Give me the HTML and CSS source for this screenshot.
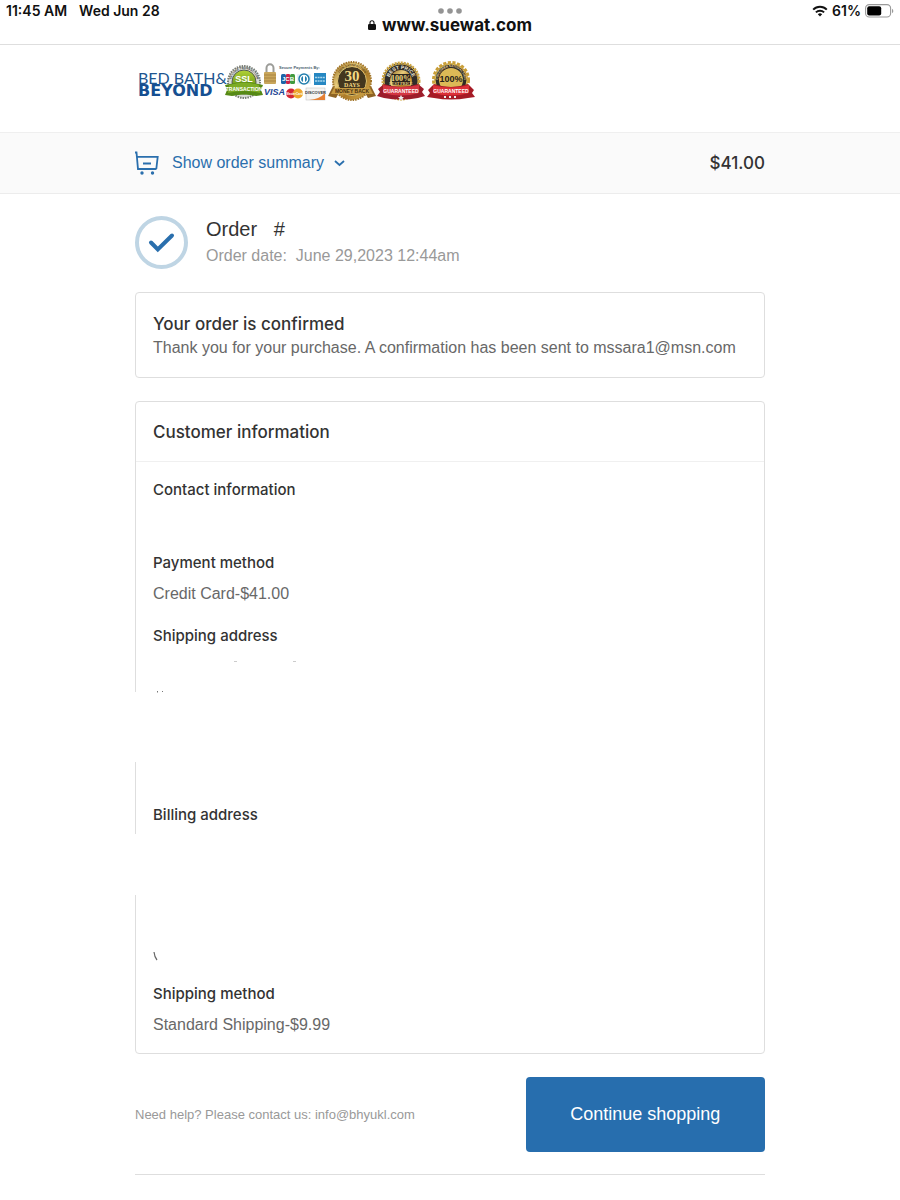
FILE: index.html
```html
<!DOCTYPE html>
<html lang="en">
<head>
    <meta charset="UTF-8">
    <meta name="viewport" content="width=device-width, initial-scale=1.0">
    <title>Order confirmation</title>
    <link rel="stylesheet" href="styles.css">
</head>
<body>
    <div class="browser-bar">
        <div class="status-left"><span>11:45 AM</span><span>Wed Jun 28</span></div>
        <div class="address">
            <svg class="dots" width="24" height="6" viewBox="0 0 24 6" fill="#949494"><circle cx="3" cy="3" r="2.8"/><circle cx="12" cy="3" r="2.8"/><circle cx="21" cy="3" r="2.8"/></svg>
            <div class="url">
                <svg width="8" height="10" viewBox="0 0 8 10"><rect y="4" width="8" height="6" rx="1.2" fill="#111"/><path d="M2 4.5V2.8a2 2 0 0 1 4 0v1.7" fill="none" stroke="#111" stroke-width="1.1"/></svg>
                <span>www.suewat.com</span>
            </div>
        </div>
        <div class="status-right">
            <svg width="16" height="12" viewBox="0 0 16 12" fill="none" stroke="#111" stroke-width="2"><path d="M1.2 4.6a9.6 9.6 0 0 1 13.6 0M3.9 7.4a5.8 5.8 0 0 1 8.2 0"/><path d="M8 11.6 5.8 9.3a3.2 3.2 0 0 1 4.4 0z" fill="#111" stroke="none"/></svg>
            <span>61%</span>
            <svg width="29" height="14" viewBox="0 0 29 14"><rect x=".6" y=".6" width="25" height="12.4" rx="3.6" fill="#fff" stroke="#999" stroke-width="1.1"/><rect x="2.2" y="2.2" width="14" height="9.2" rx="2" fill="#000"/><path d="M27 4.8c1.8.8 1.8 3.6 0 4.4z" fill="#999"/></svg>
        </div>
    </div>

    <header class="site-header">
        <div class="wrap">
            <svg class="banner" width="342" height="48" viewBox="0 0 342 48">
                <defs>
                    <linearGradient id="gold" x1="0" y1="0" x2="1" y2="1">
                        <stop offset="0" stop-color="#8d651d"/>
                        <stop offset=".35" stop-color="#e9cd7c"/>
                        <stop offset=".6" stop-color="#ad7b27"/>
                        <stop offset="1" stop-color="#d9b457"/>
                    </linearGradient>
                    <linearGradient id="green" x1="0" y1="0" x2="0" y2="1">
                        <stop offset="0" stop-color="#b3d334"/>
                        <stop offset="1" stop-color="#4c7d12"/>
                    </linearGradient>
                    <path id="arc30" d="M202 24a15 15 0 0 1 30 0"/>
                    <path id="arcBest" d="M254 24a12 12 0 0 1 24 0"/>
                    <path id="arcSat" d="M303 23a13 13 0 0 1 26 0"/>
                    <path id="arcSsl" d="M96 25a13 13 0 0 1 26 0"/>
                </defs>

                <!-- store name -->
                <text class="brand-top" x="3" y="27">BED BATH&amp;</text>
                <text class="brand-bottom" x="3" y="39">BEYOND</text>

                <!-- ssl seal -->
                <circle cx="109" cy="25" r="16" fill="#d9dcd8" stroke="#777c74" stroke-width="2" stroke-dasharray="1.5 1"/>
                <text class="tiny" fill="#444"><textPath href="#arcSsl" startOffset="50%">SECURE TRANSACTION</textPath></text>
                <circle cx="109" cy="25" r="12" fill="url(#green)" stroke="#555b52"/>
                <text class="seal-text" x="109" y="25" font-size="9">SSL</text>
                <path d="M90 28l5-1q14-4 28 0l5 1-2 5 2 5-7 1q-12-3-24 0l-7-1 2-5z" fill="#568916"/>
                <path d="M94 28q15-5 30 0l1 8q-16-4-32 0z" fill="#7dac25"/>
                <text class="seal-text" x="109" y="34" font-size="5">TRANSACTION</text>

                <!-- payment marks -->
                <text class="secure" x="144" y="12">Secure Payments By:</text>
                <path d="M131.500 16v-5a3.500 3.800 0 0 1 7 0v5" fill="none" stroke="#9b9c98" stroke-width="2"/>
                <rect x="129" y="15" width="12" height="12" rx="1" fill="#c9a65b"/>
                <path d="M129 18h12M129 21h12M129 24h12" stroke="#a98443"/>
                <rect x="146" y="17" width="5" height="10" rx="1.500" fill="#1c65a8"/>
                <rect x="151" y="17" width="4" height="10" rx="1" fill="#c8254c"/>
                <rect x="155" y="17" width="5" height="10" rx="1.500" fill="#3f9a3f"/>
                <text class="seal-text" x="153" y="24" font-size="6">JCB</text>
                <rect x="162" y="17" width="14" height="10" rx="1" fill="#e4f1f7"/>
                <circle cx="169" cy="22" r="5" fill="#fff" stroke="#207dad" stroke-width="1.500"/>
                <path d="M168 19a3.300 3.300 0 0 0 0 6zM170 19a3.300 3.300 0 0 1 0 6z" fill="#207dad"/>
                <rect x="179" y="16" width="12" height="12" fill="#2687c2"/>
                <path d="M180 20.500h10M180 24h10" stroke="#a9d6ec" stroke-width="1.500" stroke-dasharray="2 .6"/>
                <text class="visa" x="129" y="38">VISA</text>
                <circle cx="156" cy="36.500" r="5" fill="#d42735"/>
                <circle cx="163" cy="36.500" r="5" fill="#eda52c"/>
                <text class="seal-text" x="159.500" y="38" font-size="3">MasterCard</text>
                <rect x="171" y="31" width="19" height="12" fill="#f5f4f2" stroke="#bbb" stroke-width=".5"/>
                <path d="M190 36v7h-16q11-1 16-7z" fill="#e68133"/>
                <text x="180.500" y="36.500" font-size="4" font-weight="700" text-anchor="middle" fill="#333">DISCOVER</text>

                <!-- thirty days seal -->
                <path d="M198 29l-5 10 8 2 4-7zM236 29l5 10-8 2-4-7z" fill="#8e6425"/>
                <circle cx="217" cy="24" r="19" fill="url(#gold)" stroke="#a27529" stroke-width="2" stroke-dasharray="1.500 1"/>
                <circle cx="217" cy="24" r="14.500" fill="#44371e" stroke="#e0c36f"/>
                <text class="tiny" fill="#5a3f12"><textPath href="#arc30" startOffset="50%">100% SATISFACTION</textPath></text>
                <text x="217" y="24" class="seal-serif" font-size="15">30</text>
                <text x="217" y="30" class="seal-serif" font-size="6">DAYS</text>
                <path d="M199 31h36l3 6h-42z" fill="#c69a42"/>
                <text x="217" y="36" font-size="5" font-weight="700" text-anchor="middle" fill="#493111">MONEY BACK</text>

                <!-- best price seal -->
                <circle cx="266" cy="24" r="18" fill="#302d2a" stroke="#cda542" stroke-width="3" stroke-dasharray="2 1"/>
                <circle cx="266" cy="24" r="17" fill="#302d2a" stroke="#d7b24e"/>
                <circle cx="266" cy="24" r="11" fill="url(#gold)"/>
                <text class="ring"><textPath href="#arcBest" startOffset="50%">BEST PRICE</textPath></text>
                <rect x="257" y="17" width="18" height="11" fill="#2b251d"/>
                <text x="266" y="24" class="seal-serif" font-size="8">100%</text>
                <text x="266" y="28" class="seal-serif" font-size="4">BEST PRICE</text>
                <path d="M243 32l6-5q17 6 34 0l6 5-2 3 3 4-7 2q-17 3-34 0l-7-2 3-4z" fill="#9d1d2b"/>
                <path d="M248 28q18 4 36 0v8q-18 5-36 0z" fill="#d43642"/>
                <text class="seal-text" x="266" y="36" font-size="5">GUARANTEED</text>
                <path d="M266 38l1 2h2l-1.500 1.500.5 2-2-1-2 1 .5-2-1.500-1.500h2z" fill="#eee"/>

                <!-- satisfaction seal -->
                <circle cx="316" cy="23" r="17" fill="url(#gold)" stroke="#c99e37" stroke-width="4" stroke-dasharray="3 1.500"/>
                <circle cx="316" cy="23" r="16" fill="#302c25" stroke="#dfbd58"/>
                <text class="tiny" fill="#f1dca0"><textPath href="#arcSat" startOffset="50%">CUSTOMER SATISFACTION</textPath></text>
                <circle cx="316" cy="23" r="12" fill="#dcb956"/>
                <text x="316" y="25" font-size="9" font-weight="700" text-anchor="middle" fill="#26211a">100%</text>
                <path d="M293 33l6-6q17 6 34 0l6 6-2 3 3 4-7 1q-17 3-34 0l-7-1 3-4z" fill="#a61b26"/>
                <path d="M298 28q18 5 36 0v8q-18 5-36 0z" fill="#dc3038"/>
                <text class="seal-text" x="316" y="36" font-size="5">GUARANTEED</text>
                <path d="M309 40h14" stroke="#eee" stroke-width="2" stroke-dasharray="2 3"/>
            </svg>
        </div>
    </header>

    <div class="summary">
        <div class="wrap summary-row">
            <button class="summary-toggle" type="button">
                <svg width="25" height="24" viewBox="0 0 25 24" fill="none" stroke="#2a6fad" stroke-width="1.800"><path d="M0 1.500h1.500L3 18h18.500M1.700 5.800h21L21.300 18M8 12.500h8"/><circle cx="7" cy="22" r="1.700" fill="#2a6fad" stroke="none"/><circle cx="17.500" cy="22" r="1.700" fill="#2a6fad" stroke="none"/></svg>
                <span>Show order summary</span>
                <svg width="11" height="7" viewBox="0 0 11 7" fill="none" stroke="#2a6fad" stroke-width="1.800"><path d="M1 1l4.500 4L10 1"/></svg>
            </button>
            <span class="total">$41.00</span>
        </div>
    </div>

    <main class="wrap">
        <div class="order">
            <svg width="53" height="53" viewBox="0 0 53 53" fill="none"><circle cx="26.500" cy="26.500" r="24.500" stroke="#bfd5e4" stroke-width="4"/><path d="M16 26.500l6.800 7L37 19.500" stroke="#2a6fad" stroke-width="4" stroke-linecap="round"/></svg>
            <div>
                <h1>Order &nbsp; #</h1>
                <p class="order-date">Order date:&nbsp; June 29,2023 12:44am</p>
            </div>
        </div>

        <section class="card confirmed">
            <h2>Your order is confirmed</h2>
            <p>Thank you for your purchase. A confirmation has been sent to mssara1@msn.com</p>
        </section>

        <section class="card">
            <h2 class="card-title">Customer information</h2>
            <div class="card-body">
                <div class="info">
                    <h3>Contact information</h3>
                    <p></p>
                </div>
                <div class="info">
                    <h3>Payment method</h3>
                    <p>Credit Card-$41.00</p>
                </div>
                <div class="info">
                    <h3>Shipping address</h3>
                    <div class="address-box">
                        <svg class="marks" width="150" height="37" viewBox="0 0 150 37" fill="none"><path d="M81 6.500h3M140 6.500h3" stroke="#ccc"/><path d="M4.500 36v1.500M9.500 36v1" stroke="#777"/></svg>
                        <div class="blank"></div>
                    </div>
                </div>
                <div class="info">
                    <h3>Billing address</h3>
                    <div class="address-box">
                        <div class="blank short"></div>
                        <svg class="stroke" width="6" height="10" viewBox="0 0 6 10" fill="none"><path d="M1 1q.5 5 3 8" stroke="#666" stroke-width="1.200"/></svg>
                    </div>
                </div>
                <div class="info">
                    <h3>Shipping method</h3>
                    <p>Standard Shipping-$9.99</p>
                </div>
            </div>
        </section>

        <div class="actions">
            <p>Need help? Please contact us: info@bhyukl.com</p>
            <button class="continue" type="button">Continue shopping</button>
        </div>
        <footer></footer>
    </main>
</body>
</html>
```
FILE: styles.css
```css
* {
    margin: 0;
    padding: 0;
    box-sizing: border-box;
}
body {
    font-family: "Liberation Sans", Arial, sans-serif;
    font-size: 16px;
    line-height: 24px;
    color: #686868;
    background-color: #fff;
}
svg {
    display: block;
    flex-shrink: 0;
}
button {
    font-family: inherit;
    border: none;
    cursor: pointer;
}
.wrap {
    width: 70%;
    margin: 0 auto;
}

/* status bar */
.browser-bar {
    display: grid;
    grid-template-columns: 1fr auto 1fr;
    height: 45px;
    padding: 0 6px;
    border-bottom: 1px solid #dedede;
    font-family: Inter, sans-serif;
    font-size: 14px;
    font-weight: 600;
    line-height: 22px;
    color: #111;
}
.status-left {
    display: flex;
    gap: 12px;
}
.status-right {
    display: flex;
    justify-content: flex-end;
    align-items: center;
    gap: 4px;
    height: 22px;
}
.address {
    padding-top: 8px;
}
.dots {
    margin: 0 auto;
}
.url {
    display: flex;
    align-items: center;
    gap: 6px;
    font-size: 17px;
    font-weight: 700;
}

/* logo and trust badges */
.site-header {
    height: 87px;
    padding-top: 12px;
}
.banner {
    font-family: "Liberation Sans", Arial, sans-serif;
}
.brand-top {
    font-family: Lato, sans-serif;
    font-size: 16px;
    fill: #20558f;
}
.brand-bottom {
    font-family: "DejaVu Sans", sans-serif;
    font-size: 16px;
    font-weight: 700;
    fill: #164f91;
}
.seal-text {
    font-weight: 700;
    text-anchor: middle;
    fill: #fff;
}
.seal-serif {
    font-family: "Liberation Serif", serif;
    font-weight: 700;
    text-anchor: middle;
    fill: #f3d984;
}
.tiny {
    font-size: 3px;
    font-weight: 700;
    text-anchor: middle;
}
.ring {
    font-size: 5px;
    font-weight: 700;
    text-anchor: middle;
    fill: #f0ead8;
}
.secure {
    font-size: 4px;
    font-weight: 700;
    fill: #4b6270;
}
.visa {
    font-size: 9px;
    font-weight: 700;
    font-style: italic;
    fill: #1b4594;
}

/* order summary strip */
.summary {
    background-color: #fafafa;
    border-top: 1px solid #efefef;
    border-bottom: 1px solid #ececec;
}
.summary-row {
    display: flex;
    justify-content: space-between;
    align-items: center;
    height: 60px;
}
.summary-toggle {
    display: flex;
    align-items: center;
    background: none;
    font-size: 16px;
    color: #2a6fad;
}
.summary-toggle span {
    margin: 0 10px 0 12px;
}
.total {
    font-size: 17px;
    font-weight: 500;
    font-family: Inter, sans-serif;
    color: #333;
}

/* order heading */
.order {
    display: flex;
    align-items: center;
    gap: 18px;
    padding: 22px 0 23px;
}
h1 {
    font-size: 20px;
    font-weight: 400;
    line-height: 27px;
    color: #333;
}
.order-date {
    font-size: 16px;
    line-height: 26px;
    color: #999;
}

/* cards */
.card {
    margin-bottom: 23px;
    border: 1px solid #dedede;
    border-radius: 4px;
}
h2, h3 {
    font-family: Inter, sans-serif;
    font-weight: 500;
    color: #333;
}
h2 {
    font-size: 17px;
}
h3 {
    font-size: 15px;
}
.confirmed {
    padding: 19px 17px 17px;
}
.card-title {
    padding: 18px 17px 17px;
    border-bottom: 1px solid #f0f0f0;
}
.card-body {
    padding: 16px 17px;
}
.info + .info {
    margin-top: 18px;
}
.info p {
    min-height: 24px;
    margin-top: 7px;
}
.address-box {
    height: 130px;
    margin-top: 7px;
}
.blank {
    height: 70px;
    margin-left: -18px;
    background-color: #fff;
}
.blank.short {
    height: 61px;
}
.marks {
    overflow: visible;
}
.stroke {
    margin-top: 56px;
}

/* bottom actions */
.actions {
    display: flex;
    justify-content: space-between;
    align-items: center;
    padding-bottom: 22px;
    border-bottom: 1px solid #dedede;
}
.actions p {
    font-size: 13px;
    color: #999;
}
.continue {
    width: 38%;
    height: 75px;
    border-radius: 4px;
    background-color: #276eae;
    color: #fff;
    font-size: 18px;
}
footer {
    height: 24px;
}
```
